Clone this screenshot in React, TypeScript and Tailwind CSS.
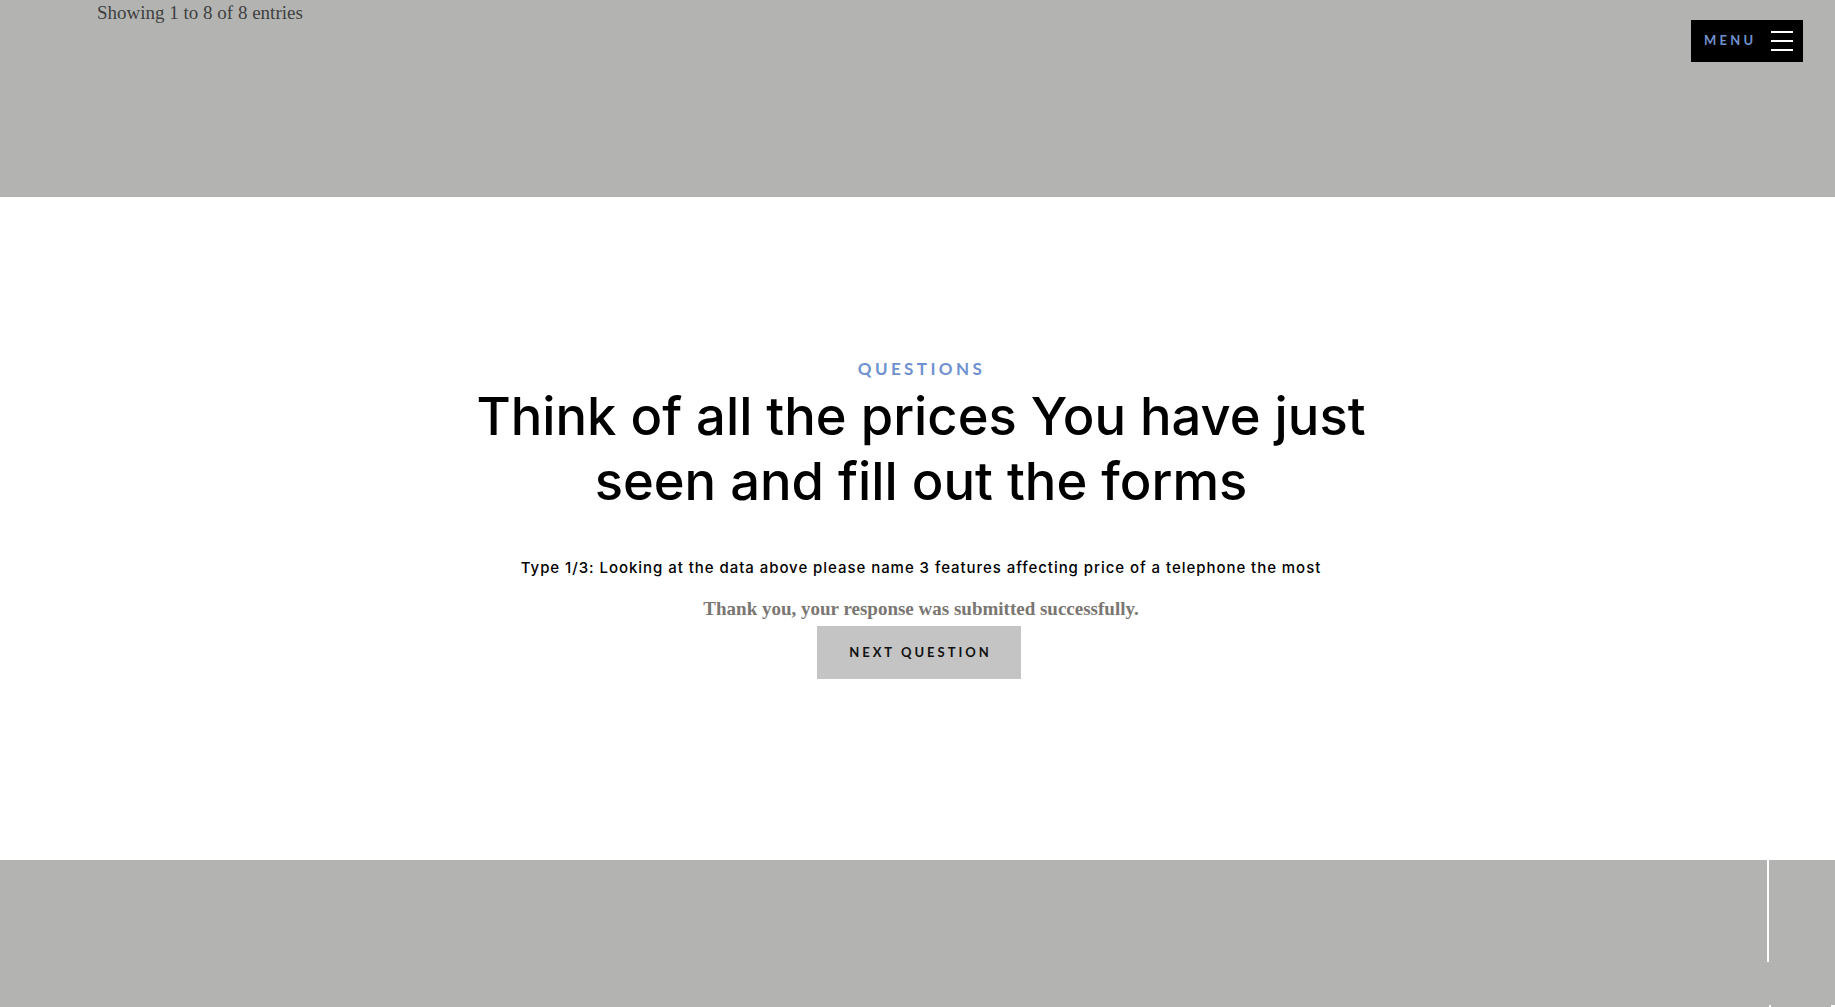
import React from "react";

export default function App() {
  return (
    <div className="w-full min-h-[1007px] flex flex-col bg-[#b3b4b1]">
      {/* top band */}
      <div className="h-[197px] bg-[#b3b4b1] flex items-start justify-between pl-[97px] pr-[32px]">
        <p className="text-[19px] leading-[26px] text-[#3f3f3f] [font-family:'Liberation_Serif',serif] mt-[0px]">
          Showing 1 to 8 of 8 entries
        </p>
        <button className="mt-[20px] w-[112px] h-[42px] bg-black flex items-center justify-between pl-[13px] pr-[10px]">
          <span className="text-[13px] font-bold tracking-[3.2px] text-[#7090cc] [font-family:'Lato',sans-serif]">
            MENU
          </span>
          <span className="flex flex-col gap-[7px] w-[22px]">
            <span className="block h-[2px] w-[22px] bg-white" />
            <span className="block h-[2px] w-[22px] bg-white" />
            <span className="block h-[2px] w-[22px] bg-white" />
          </span>
        </button>
      </div>

      {/* white section */}
      <div className="h-[663px] bg-white flex flex-col items-center pt-[160px] pl-[7px]">
        <p className="text-[17px] leading-[24px] font-bold tracking-[3.4px] text-[#7091cf] [font-family:'Lato',sans-serif] pl-[1px]">
          QUESTIONS
        </p>
        <h1 className="mt-[3px] text-center text-[52.5px] leading-[65px] font-medium text-black [font-family:'Inter',sans-serif] max-w-[920px]">
          Think of all the prices You have just
          <br />
          seen and fill out the forms
        </h1>
        <p className="mt-[44px] text-[15px] leading-[20px] font-medium tracking-[0.95px] text-black [font-family:'Inter',sans-serif]">
          Type 1/3: Looking at the data above please name 3 features affecting price of a telephone the most
        </p>
        <p className="mt-[20px] text-[19px] leading-[22px] font-bold text-[#7a7672] [font-family:'Liberation_Serif',serif]">
          Thank you, your response was submitted successfully.
        </p>
        <button className="mt-[6px] -ml-[4px] w-[204px] h-[53px] bg-[#c4c4c4] flex items-center justify-center">
          <span className="text-[13px] font-bold tracking-[3px] text-[#111] [font-family:'Lato',sans-serif] pl-[3px]">
            NEXT QUESTION
          </span>
        </button>
      </div>

      {/* bottom band */}
      <div className="h-[147px] bg-[#b3b4b1] flex flex-col">
        <div className="flex justify-end pr-[66px]">
          <div className="w-[2px] h-[102px] bg-white" />
        </div>
        <div className="flex-1" />
        <div className="flex justify-end h-[2px]">
          <div className="w-[2px] h-[2px] bg-white mr-[60px]" />
          <div className="w-[4px] h-[2px] bg-white" />
        </div>
      </div>
    </div>
  );
}
